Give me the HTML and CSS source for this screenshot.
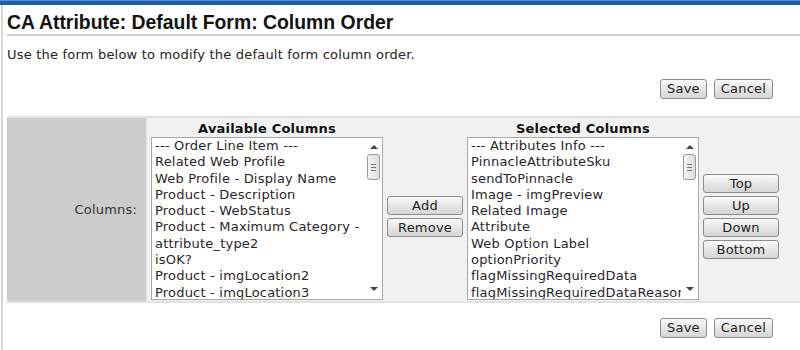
FILE: index.html
```html
<!DOCTYPE html>
<html lang="en">
<head>
    <meta charset="UTF-8">
    <title>CA Attribute: Default Form: Column Order</title>
    <link rel="stylesheet" href="styles.css">
</head>
<body>
    <div class="topbar"></div>
    <div class="page">
        <h1 class="title">CA Attribute: Default Form: Column Order</h1>
        <p class="intro">Use the form below to modify the default form column order.</p>

        <div class="actions">
            <button class="btn">Save</button>
            <button class="btn">Cancel</button>
        </div>

        <!-- Column order form -->
        <div class="form-panel">
            <div class="label-cell">Columns:</div>
            <div class="field-cell">
                <div class="list-col">
                    <div class="col-head">Available Columns</div>
                    <div class="listbox">
                        <div class="options">
                            <div class="option">--- Order Line Item ---</div>
                            <div class="option">Related Web Profile</div>
                            <div class="option">Web Profile - Display Name</div>
                            <div class="option">Product - Description</div>
                            <div class="option">Product - WebStatus</div>
                            <div class="option">Product - Maximum Category -</div>
                            <div class="option">attribute_type2</div>
                            <div class="option">isOK?</div>
                            <div class="option">Product - imgLocation2</div>
                            <div class="option">Product - imgLocation3</div>
                        </div>
                        <div class="scrollbar">
                            <span class="arrow-up"></span>
                            <span class="thumb"><i></i><i></i><i></i></span>
                            <span class="track"></span>
                            <span class="arrow-down"></span>
                        </div>
                    </div>
                </div>

                <div class="btn-stack">
                    <button class="btn wide">Add</button>
                    <button class="btn wide">Remove</button>
                </div>

                <div class="list-col">
                    <div class="col-head">Selected Columns</div>
                    <div class="listbox">
                        <div class="options">
                            <div class="option">--- Attributes Info ---</div>
                            <div class="option">PinnacleAttributeSku</div>
                            <div class="option">sendToPinnacle</div>
                            <div class="option">Image - imgPreview</div>
                            <div class="option">Related Image</div>
                            <div class="option">Attribute</div>
                            <div class="option">Web Option Label</div>
                            <div class="option">optionPriority</div>
                            <div class="option">flagMissingRequiredData</div>
                            <div class="option">flagMissingRequiredDataReason</div>
                        </div>
                        <div class="scrollbar">
                            <span class="arrow-up"></span>
                            <span class="thumb"><i></i><i></i><i></i></span>
                            <span class="track"></span>
                            <span class="arrow-down"></span>
                        </div>
                    </div>
                </div>

                <div class="btn-stack">
                    <button class="btn wide">Top</button>
                    <button class="btn wide">Up</button>
                    <button class="btn wide">Down</button>
                    <button class="btn wide">Bottom</button>
                </div>
            </div>
        </div>

        <div class="actions bottom">
            <button class="btn">Save</button>
            <button class="btn">Cancel</button>
        </div>
    </div>
</body>
</html>
```

FILE: styles.css
```css
body {
    margin: 0;
    font-family: 'DejaVu Sans', Verdana, sans-serif;
    font-size: 13px;
    letter-spacing: 0.2px;
    color: #222;
    background-color: #fff;
    height: 350px;
    overflow: hidden;
}

.topbar {
    height: 4px;
    background-color: #1c5ca8;
    border-top: 1px solid #5b8fcc;
}

.page {
    margin-left: 1px;
    border-left: 2px solid #d6d6d6;
    padding-left: 4px;
    height: 345px;
}

.title {
    margin: 0;
    padding-top: 6px;
    font-family: 'Liberation Sans', Arial, sans-serif;
    font-size: 19.4px;
    font-weight: bold;
    letter-spacing: 0;
    line-height: 22px;
    color: #111;
    border-bottom: 2px solid #cfcfcf;
    padding-bottom: 1px;
}

.intro {
    margin: 11px 0 0 0;
    line-height: 16px;
}

.actions {
    display: flex;
    justify-content: flex-end;
    gap: 7px;
    padding-right: 27px;
    margin-top: 16px;
}

.actions.bottom {
    margin-top: 15px;
}

.btn {
    font-family: 'DejaVu Sans', Verdana, sans-serif;
    font-size: 13px;
    letter-spacing: 0.2px;
    color: #222;
    height: 20px;
    padding: 0 6px;
    border: 1px solid #8c8c8c;
    border-radius: 3px;
    background: linear-gradient(#fafafa, #e4e4e4 55%, #d6d6d6);
    line-height: 18px;
}

.btn.wide {
    width: 76px;
    height: 19px;
    line-height: 17px;
    padding: 0;
}

.form-panel {
    display: flex;
    margin-top: 17px;
    border-top: 2px solid #e2e2e2;
    border-bottom: 2px solid #e2e2e2;
    background-color: #f1f1f1;
    height: 183px;
}

.label-cell {
    width: 140px;
    padding-right: 9px;
    box-sizing: border-box;
    background-color: #cccccc;
    display: flex;
    align-items: center;
    justify-content: flex-end;
    color: #333;
    border-right: 1px solid #e4e4e4;
}

.field-cell {
    display: flex;
    gap: 4px;
    padding-left: 4px;
    padding-top: 2px;
}

.list-col {
    width: 232px;
    display: flex;
    flex-direction: column;
}

.col-head {
    font-weight: bold;
    text-align: center;
    color: #111;
    line-height: 17px;
}

.listbox {
    display: flex;
    height: 161px;
    border: 1px solid #a8a8a8;
    background-color: #fff;
}

.options {
    flex: 1;
    overflow: hidden;
    padding-left: 3px;
}

.option {
    white-space: nowrap;
    line-height: 16.3px;
    color: #2a1f2a;
}

.scrollbar {
    width: 17px;
    display: flex;
    flex-direction: column;
    align-items: center;
}

.arrow-up,
.arrow-down {
    display: block;
    width: 0;
    height: 0;
    border-left: 4px solid transparent;
    border-right: 4px solid transparent;
}

.arrow-up {
    border-bottom: 4px solid #444;
    margin: 7px 0 5px 0;
}

.arrow-down {
    border-top: 4px solid #444;
    margin: 5px 0 8px 0;
}

.thumb {
    width: 13px;
    height: 26px;
    box-sizing: border-box;
    border: 1px solid #9a9a9a;
    border-radius: 3px;
    background: linear-gradient(90deg, #f4f4f4, #dedede);
    display: flex;
    flex-direction: column;
    align-items: center;
    justify-content: center;
    gap: 2px;
}

.thumb i {
    display: block;
    width: 5px;
    height: 1px;
    background-color: #777;
}

.track {
    flex: 1;
}

.btn-stack {
    width: 76px;
    display: flex;
    flex-direction: column;
    gap: 3px;
    align-self: center;
    margin-top: 11px;
}
```
